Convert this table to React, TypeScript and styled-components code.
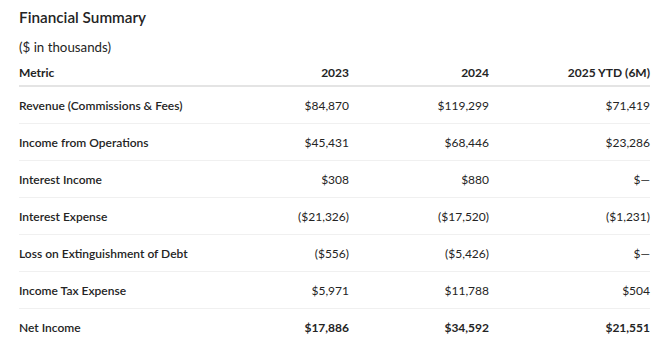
import React from 'react'
import styled, { createGlobalStyle } from 'styled-components'

const Global = createGlobalStyle`
  html, body { margin: 0; padding: 0; background: #fff; }
  body { font-family: Lato, "Open Sans", Arial, sans-serif; color: #242424; }
`

const Card = styled.section`
  width: 671px;
  height: 360px;
  box-sizing: border-box;
  padding: 6px 21px 0 19px;
  overflow: hidden;
`

const Title = styled.h2`
  margin: 0;
  font-size: 15.3px;
  font-weight: 600;
  line-height: 22px;
`

const Note = styled.p`
  margin: 10px 0 0;
  font-size: 13.3px;
  line-height: 18px;
`

const Table = styled.table`
  width: 631px;
  margin-top: 4px;
  border-collapse: collapse;
  table-layout: fixed;
  font-size: 12px;
`

const Th = styled.th<{ $w: number; $left?: boolean }>`
  width: ${p => p.$w}px;
  height: 25px;
  padding: 0;
  font-weight: 700;
  text-align: ${p => (p.$left ? 'left' : 'right')};
  border-bottom: 2px solid #e4e4e4;
`

const Row = styled.tr`
  & + & td { border-top: 1px solid #f0f0f0; }
`

const Td = styled.td<{ $left?: boolean; $strong?: boolean }>`
  height: 36px;
  padding: 0;
  text-align: ${p => (p.$left ? 'left' : 'right')};
  font-weight: ${p => (p.$left ? 600 : p.$strong ? 700 : 400)};
`

type Line = { label: string; values: string[]; strong?: boolean }

const rows: Line[] = [
  { label: 'Revenue (Commissions & Fees)', values: ['$84,870', '$119,299', '$71,419'] },
  { label: 'Income from Operations', values: ['$45,431', '$68,446', '$23,286'] },
  { label: 'Interest Income', values: ['$308', '$880', '$—'] },
  { label: 'Interest Expense', values: ['($21,326)', '($17,520)', '($1,231)'] },
  { label: 'Loss on Extinguishment of Debt', values: ['($556)', '($5,426)', '$—'] },
  { label: 'Income Tax Expense', values: ['$5,971', '$11,788', '$504'] },
  { label: 'Net Income', values: ['$17,886', '$34,592', '$21,551'], strong: true },
]

export default function App() {
  return (
    <Card>
      <Global />
      <Title>Financial Summary</Title>
      <Note>($ in thousands)</Note>
      <Table>
        <thead>
          <tr>
            <Th $w={210} $left>Metric</Th>
            <Th $w={120}>2023</Th>
            <Th $w={140}>2024</Th>
            <Th $w={161}>2025 YTD (6M)</Th>
          </tr>
        </thead>
        <tbody>
          {rows.map(r => (
            <Row key={r.label}>
              <Td $left>{r.label}</Td>
              {r.values.map((v, i) => (
                <Td key={i} $strong={r.strong}>{v}</Td>
              ))}
            </Row>
          ))}
        </tbody>
      </Table>
    </Card>
  )
}
